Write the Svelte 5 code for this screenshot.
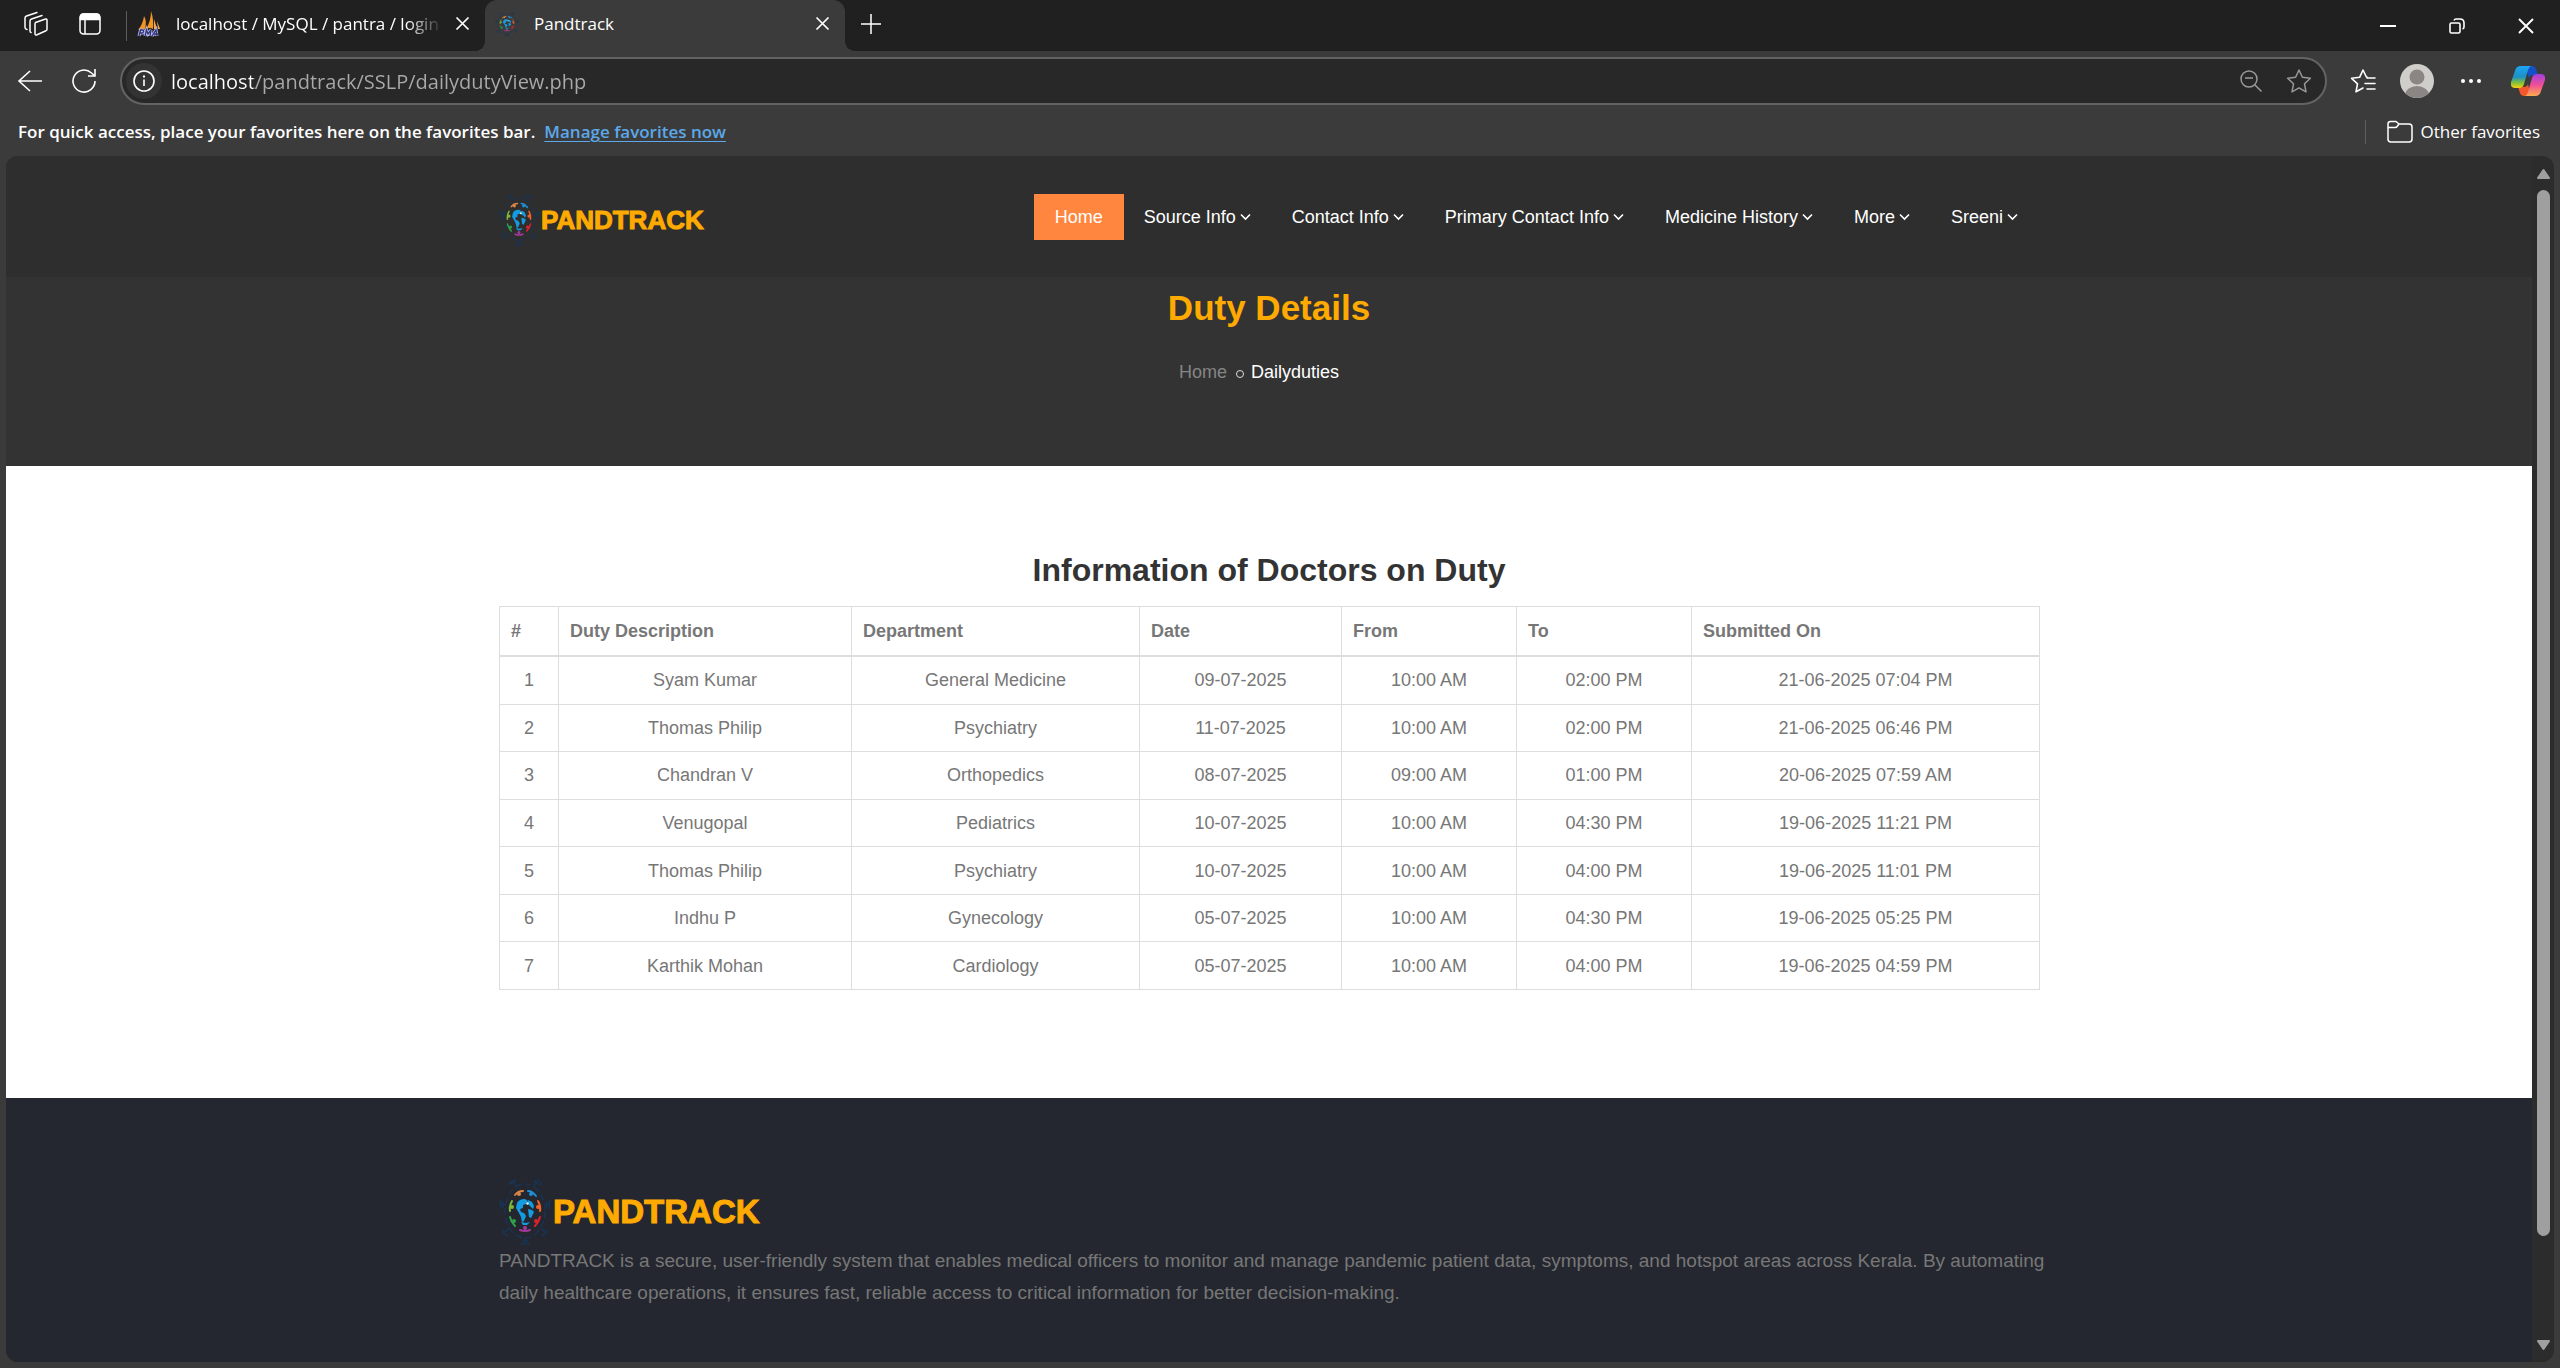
<script>
  let address = $state('localhost/pandtrack/SSLP/dailydutyView.php');

  const menus = ['Source Info', 'Contact Info', 'Primary Contact Info', 'Medicine History', 'More', 'Sreeni'];

  const columns = ['#', 'Duty Description', 'Department', 'Date', 'From', 'To', 'Submitted On'];

  const duties = [
    ['Syam Kumar', 'General Medicine', '09-07-2025', '10:00 AM', '02:00 PM', '21-06-2025 07:04 PM'],
    ['Thomas Philip', 'Psychiatry', '11-07-2025', '10:00 AM', '02:00 PM', '21-06-2025 06:46 PM'],
    ['Chandran V', 'Orthopedics', '08-07-2025', '09:00 AM', '01:00 PM', '20-06-2025 07:59 AM'],
    ['Venugopal', 'Pediatrics', '10-07-2025', '10:00 AM', '04:30 PM', '19-06-2025 11:21 PM'],
    ['Thomas Philip', 'Psychiatry', '10-07-2025', '10:00 AM', '04:00 PM', '19-06-2025 11:01 PM'],
    ['Indhu P', 'Gynecology', '05-07-2025', '10:00 AM', '04:30 PM', '19-06-2025 05:25 PM'],
    ['Karthik Mohan', 'Cardiology', '05-07-2025', '10:00 AM', '04:00 PM', '19-06-2025 04:59 PM']
  ];
</script>

{#snippet emblem(cls)}
  <svg class={cls} viewBox="0 0 52 66" preserveAspectRatio="none" fill="none" aria-hidden="true">
    <g stroke="#16365c" stroke-width="1.2">
      <ellipse cx="26" cy="32" rx="20" ry="27" stroke-dasharray="7 3" />
      <path d="M18 8 14 3M10 5l3-3 3-1M12 5l5-4M34 8l4-5M36 1l4 1 3 4M35 2l5 4M7 26l-5-1M1 21l1 9M4 22v7M45 26l5-1M51 21l-1 9M48 22v7M10 49l-4 4M3 50l2 4 4 3M4 54l5 2M42 49l4 4M49 50l-2 4-4 3M48 54l-5 2M26 59v6M21 65h10M23 62h6" />
    </g>
    <g stroke-width="2" stroke-linecap="round">
      <path stroke="#d98545" d="M16 16q3-4 8-4" />
      <path stroke="#1c8fd6" d="M29 12q4 0 8 5" />
      <path stroke="#f0642b" d="M39 22q3 5 2 10" />
      <path stroke="#d8242f" d="M41 38q-1 5-5 9" />
      <path stroke="#a33a9b" d="M31 51q-5 2-10 0" />
      <path stroke="#2ea04a" d="M16 47q-4-4-5-9" />
      <path stroke="#7cb93b" d="M11 32q-1-5 2-10" />
    </g>
    <g>
      <circle cx="20" cy="15" r="2" fill="#d98545" />
      <circle cx="32" cy="15" r="2" fill="#1c8fd6" />
      <circle cx="39" cy="28" r="2" fill="#f0642b" />
      <circle cx="37" cy="42" r="2" fill="#d8242f" />
      <circle cx="26" cy="49" r="2" fill="#a33a9b" />
      <circle cx="15" cy="42" r="2" fill="#2ea04a" />
      <circle cx="13" cy="28" r="2" fill="#7cb93b" />
    </g>
    <path fill="#159be0" d="M18 24q2-4 8-4l3 2-2 3-3 1v3l-3 1 1 3 3 1 2 3-2 5-2 1-1-5-2-4-3-5zM29 21l4 2 2 4-1 3-3-3-2-2zM29 30l4 1 2 2-3 6-2-1zM22 43l5 1 4-1-3 3h-4z" />
    <path fill="#d5effb" d="m28 23 2 1-1 2-2-1z" />
  </svg>
{/snippet}

{#snippet cross()}
  <svg width="15" height="15" viewBox="0 0 15 15" aria-hidden="true">
    <path d="m1.500 1.500 12 12m0-12-12 12" stroke="#fff" stroke-width="1.700" fill="none" />
  </svg>
{/snippet}

<div class="window">
  <div class="tabs">
    <button class="tool first" aria-label="Workspaces">
      <svg width="26" height="26" viewBox="0 0 26 26" fill="none" stroke="#fff" stroke-width="1.500" stroke-linejoin="round" stroke-linecap="round">
        <path d="m12.500 11.500 10-3.500q1.500-.5 1.500 1.200v9q0 1-1 1.500l-9 4q-2 .8-2-1.200v-9q0-1.500.5-2zM8 21.500q-1-.2-1-1.500V10q0-1.500 1.500-2L19 4.500M4 18.500q-2-.3-2-2V7q0-1.500 1.500-2L14 1.500" />
      </svg>
    </button>
    <button class="tool" aria-label="Tab actions">
      <svg width="24" height="24" viewBox="0 0 24 24" fill="none" stroke="#fff" stroke-width="1.500">
        <rect x="2" y="2" width="20" height="20" rx="3.500" />
        <path d="M2.500 5q0-3 3-3h13q3 0 3 3v2.500h-19z" fill="#fff" />
        <path d="M7 7v15" />
      </svg>
    </button>
    <span class="tab-rule"></span>
    <div class="tab">
      <svg width="24" height="26" viewBox="0 0 24 26" aria-hidden="true">
        <path fill="#f79521" d="M7 5q3 5 1 13-4-1-7 1Q6 13 7 5M14 0q3 9 2 18-3-2-7 0Q14 10 14 0" />
        <path fill="#f3a953" d="m17 8 3 10h-3zM20 10l3 8h-2z" />
        <path fill="none" stroke="#b9bbe6" stroke-width="3" d="M2 25l1.500-6h2.500q1.500 1.500-.5 3H3M8 25l1.500-6 1.500 4 3-4-1 6M15 25l4-6 1 6M17 23h4" />
        <path fill="none" stroke="#31337d" stroke-width="1.300" d="M2 25l1.500-6h2.500q1.500 1.500-.5 3H3M8 25l1.500-6 1.500 4 3-4-1 6M15 25l4-6 1 6M17 23h4" />
      </svg>
      <span class="tab-title fade">localhost / MySQL / pantra / login</span>
      <button class="close" aria-label="Close tab">{@render cross()}</button>
    </div>
    <div class="tab active">
      {@render emblem('favicon')}
      <span class="tab-title">Pandtrack</span>
      <button class="close" aria-label="Close tab">{@render cross()}</button>
    </div>
    <button class="new-tab" aria-label="New tab">
      <svg width="22" height="22" viewBox="0 0 22 22"><path d="M11 1v20M1 11h20" stroke="#fff" stroke-width="1.500" /></svg>
    </button>
    <div class="window-controls">
      <button aria-label="Minimize"><svg width="16" height="16" viewBox="0 0 16 16"><path d="M0 8h16" stroke="#fff" stroke-width="2" /></svg></button>
      <button aria-label="Restore">
        <svg width="16" height="16" viewBox="0 0 16 16" fill="none" stroke="#fff" stroke-width="1.600">
          <rect x="1" y="5" width="10" height="10" rx="1.500" />
          <path d="M5 2.500Q5.500 1 7 1h4q4 0 4 4v4q0 1.500-1.500 2" />
        </svg>
      </button>
      <button aria-label="Close"><svg width="16" height="16" viewBox="0 0 16 16"><path d="m1 1 14 14M15 1 1 15" stroke="#fff" stroke-width="1.900" /></svg></button>
    </div>
  </div>

  <div class="toolbar">
    <button class="tool" aria-label="Back">
      <svg width="26" height="26" viewBox="0 0 26 26" fill="none" stroke="#fff" stroke-width="1.600"><path d="M13 3 2 13l11 10M2 13h23" /></svg>
    </button>
    <button class="tool" aria-label="Refresh">
      <svg width="26" height="26" viewBox="0 0 26 26" fill="none" stroke="#fff" stroke-width="1.600"><path d="M24 13A11 11 0 1 1 20.500 5L24 8M24 1v7h-7" /></svg>
    </button>
    <form class="address" onsubmit={(e) => e.preventDefault()}>
      <button type="button" class="site-info" aria-label="View site information">
        <svg width="22" height="22" viewBox="0 0 22 22" fill="none" stroke="#fff" stroke-width="1.600">
          <circle cx="11" cy="11" r="10" /><path d="M11 9.500v6.500" /><path d="M11 5.500v2" stroke-width="2" />
        </svg>
      </button>
      <input type="text" aria-label="Address and search bar" bind:value={address} />
      <button type="button" class="tool" aria-label="Zoom out">
        <svg width="24" height="24" viewBox="0 0 24 24" fill="none" stroke="#999" stroke-width="1.500"><circle cx="10" cy="10" r="8" /><path d="M6 9h8M15.500 15.500l7 7" /></svg>
      </button>
      <button type="button" class="tool" aria-label="Add to favorites">
        <svg width="26" height="26" viewBox="0 0 26 26" fill="none" stroke="#999" stroke-width="1.500" stroke-linejoin="round"><path d="m13 2 3.400 7.300 8 1-5.900 5.500 1.500 8-7-3.900-7 3.900 1.500-8L1.600 10.300l8-1z" /></svg>
      </button>
    </form>
    <button class="tool" aria-label="Favorites">
      <svg width="26" height="26" viewBox="0 0 26 26" fill="none" stroke="#fff" stroke-width="1.600" stroke-linejoin="round" stroke-linecap="round"><path d="M17 9h-.6L13 2 9.600 9.300l-8 1 5.900 5.500-1.500 8L13 20M17 10h8M15 15.500h10M17 21h8" /></svg>
    </button>
    <button class="avatar" aria-label="Profile">
      <svg width="34" height="34" viewBox="0 0 34 34">
        <defs><clipPath id="face"><circle cx="17" cy="17" r="17" /></clipPath></defs>
        <g clip-path="url(#face)"><path fill="#d0cecb" d="M0 0h34v34H0z" /><circle cx="17" cy="13" r="7.500" fill="#8b8683" /><ellipse cx="17" cy="31" rx="12" ry="9" fill="#8b8683" /></g>
      </svg>
    </button>
    <button class="tool" aria-label="Settings and more">
      <svg width="22" height="6" viewBox="0 0 22 6" fill="#fff"><circle cx="3" cy="3" r="2" /><circle cx="11" cy="3" r="2" /><circle cx="19" cy="3" r="2" /></svg>
    </button>
    <button class="copilot" aria-label="Copilot">
      <svg width="34" height="32" viewBox="0 0 34 32">
        <defs>
          <linearGradient id="cool" x1="0" y1="0" x2="0" y2="1"><stop offset="0" stop-color="#1aa8f5" /><stop offset=".5" stop-color="#1f8fc4" /><stop offset=".75" stop-color="#7cbf3d" /><stop offset="1" stop-color="#f7d10c" /></linearGradient>
          <linearGradient id="warm" x1="0" y1="0" x2="0" y2="1"><stop offset="0" stop-color="#a23fe0" /><stop offset=".5" stop-color="#f04f96" /><stop offset="1" stop-color="#ffab4d" /></linearGradient>
        </defs>
        <path fill="#1550c9" d="M14 1h7q3 0 4 3l2 6h-5q-3 0-4 3z" />
        <path fill="#f3572c" d="M20 31h-7q-3 0-4-3l-2-6h6q3 0 4-3z" />
        <path fill="url(#cool)" d="M10 1h10q-2 1-3 4l-4 14q-1 4-5 4H4q-5 0-4-6L4 6q1-5 6-5" />
        <path fill="url(#warm)" d="M24 31H14q2-1 3-4l4-14q1-4 5-4h4q5 0 4 6l-4 11q-1 5-6 5" />
      </svg>
    </button>
  </div>

  <div class="favorites">
    <span class="hint">For quick access, place your favorites here on the favorites bar.</span>
    <a href="#favorites">Manage favorites now</a>
    <span class="fav-rule"></span>
    <button class="other">
      <svg width="26" height="24" viewBox="0 0 26 24" fill="none" stroke="#fff" stroke-width="1.500" stroke-linejoin="round"><path d="M1 20V4q0-2.500 2.500-2.500H9L12 4h10q3 0 3 3v12q0 3-3 3H4q-3 0-3-3M1 7.500h7q1.500 0 2.500-1.500L12 4" /></svg>
      Other favorites
    </button>
  </div>

  <div class="viewport">
    <div class="page">
      <header>
        <div class="container bar">
          <a class="brand" href="#home">{@render emblem('mark')}<span>PANDTRACK</span></a>
          <nav>
            <a class="current" href="#home">Home</a>
            {#each menus as menu}
              <button>{menu}<svg width="11" height="8" viewBox="0 0 11 8" aria-hidden="true"><path d="m1 1.500 4.500 4.500 4.500-4.500" fill="none" stroke="#fff" stroke-width="1.600" /></svg></button>
            {/each}
          </nav>
        </div>
      </header>

      <section class="banner">
        <h1>Duty Details</h1>
        <div class="crumbs"><a href="#home">Home</a><i></i><span>Dailyduties</span></div>
      </section>

      <main>
        <div class="container">
          <h2>Information of Doctors on Duty</h2>
          <table>
            <colgroup>
              <col class="c-num" /><col class="c-name" /><col class="c-dept" /><col class="c-date" /><col class="c-time" /><col class="c-time" /><col class="c-sub" />
            </colgroup>
            <thead>
              <tr>{#each columns as column}<th scope="col">{column}</th>{/each}</tr>
            </thead>
            <tbody>
              {#each duties as duty, i}
                <tr><td>{i + 1}</td>{#each duty as value}<td>{value}</td>{/each}</tr>
              {/each}
            </tbody>
          </table>
        </div>
      </main>

      <footer>
        <div class="container">
          <a class="brand large" href="#home">{@render emblem('mark')}<span>PANDTRACK</span></a>
          <p>PANDTRACK is a secure, user-friendly system that enables medical officers to monitor and manage pandemic patient data, symptoms, and hotspot areas across Kerala. By automating daily healthcare operations, it ensures fast, reliable access to critical information for better decision-making.</p>
        </div>
      </footer>
    </div>
    <div class="scrollbar">
      <svg width="15" height="12" viewBox="0 0 15 12"><path d="M7.500 2 13 10H2z" fill="#9f9f9f" stroke="#9f9f9f" stroke-width="2" stroke-linejoin="round" /></svg>
      <div class="track"><span></span></div>
      <svg width="15" height="12" viewBox="0 0 15 12"><path d="M7.500 10 13 2H2z" fill="#9f9f9f" stroke="#9f9f9f" stroke-width="2" stroke-linejoin="round" /></svg>
    </div>
  </div>
</div>

<style>
  :global(body) {
    margin: 0;
    background: #3b3b3b;
  }

  .window {
    display: flex;
    flex-direction: column;
    height: 100vh;
    overflow: hidden;
    background: #3b3b3b;
    color: #fff;
    font-family: 'Segoe UI', 'Open Sans', sans-serif;
    font-size: 17px;
  }

  .window * {
    box-sizing: border-box;
  }

  button {
    display: flex;
    align-items: center;
    justify-content: center;
    flex: none;
    padding: 0;
    border: 0;
    background: none;
    color: inherit;
    font: inherit;
  }

  svg {
    display: block;
    flex: none;
  }

  .tool {
    width: 36px;
    height: 36px;
  }

  .tabs {
    display: flex;
    flex: none;
    align-items: center;
    height: 51px;
    background: #202020;
  }

  .tabs .tool {
    margin: 0 18px 3px 0;
  }

  .tabs .first {
    margin-left: 18px;
  }

  .tab-rule {
    width: 1px;
    height: 30px;
    background: #5c5c5c;
  }

  .tab {
    position: relative;
    display: flex;
    align-items: center;
    width: 358px;
    height: 51px;
    padding: 0 15px 4px 10px;
  }

  .active {
    width: 360px;
    border-radius: 12px 12px 0 0;
    background: #3b3b3b;
  }

  .active::before,
  .active::after {
    content: '';
    position: absolute;
    bottom: 0;
    width: 10px;
    height: 10px;
  }

  .active::before {
    left: -10px;
    background: radial-gradient(circle at 0 0, #202020 10px, #3b3b3b 10px);
  }

  .active::after {
    right: -10px;
    background: radial-gradient(circle at 100% 0, #202020 10px, #3b3b3b 10px);
  }

  .tab-title {
    flex: 1;
    min-width: 0;
    margin: 0 12px 0 15px;
    overflow: hidden;
    white-space: nowrap;
  }

  .fade {
    mask-image: linear-gradient(to right, #000 86%, transparent);
  }

  :global(.favicon) {
    width: 24px;
    height: 24px;
  }

  .new-tab {
    width: 52px;
    height: 48px;
    margin-bottom: 4px;
  }

  .window-controls {
    display: flex;
    margin-left: auto;
  }

  .window-controls button {
    width: 69px;
    height: 51px;
  }

  .toolbar {
    display: flex;
    flex: none;
    align-items: center;
    gap: 18px;
    height: 60px;
    padding: 0 14px 0 12px;
  }

  .address {
    display: flex;
    flex: 1;
    align-items: center;
    height: 48px;
    padding: 0 8px 0 4px;
    border: 2px solid #636363;
    border-radius: 24px;
    background: #282828;
  }

  .address .tool {
    margin-left: 12px;
  }

  .site-info {
    width: 36px;
    height: 36px;
    border-radius: 50%;
    background: #333;
  }

  .address input {
    flex: 1;
    min-width: 0;
    height: 36px;
    padding: 0 0 0 9px;
    border: 0;
    outline: 0;
    background: linear-gradient(to right, #fff 91px, #aaa 91px);
    background-clip: text;
    color: transparent;
    font: inherit;
    font-size: 20px;
  }

  .avatar {
    width: 36px;
    height: 36px;
  }

  .copilot {
    width: 36px;
    height: 36px;
    margin-left: 3px;
  }

  .favorites {
    display: flex;
    flex: none;
    align-items: center;
    gap: 9px;
    height: 45px;
    padding: 0 20px 4px 18px;
  }

  .hint,
  .favorites a {
    font-weight: 600;
  }

  .favorites a {
    color: #5ca8e8;
    text-underline-offset: 3px;
  }

  .fav-rule {
    width: 1px;
    height: 24px;
    margin-left: auto;
    background: #5f5f5f;
  }

  .other {
    gap: 8px;
    margin-left: 12px;
  }

  .viewport {
    display: flex;
    flex: 1;
    min-height: 0;
    margin: 0 6px 6px;
    overflow: hidden;
    border-radius: 12px;
    background: #2c2c2c;
  }

  .page {
    display: flex;
    flex: 1;
    flex-direction: column;
    min-width: 0;
    overflow: hidden;
    color: #777;
    font-family: Arial, 'Liberation Sans', sans-serif;
    font-size: 18px;
  }

  .scrollbar {
    display: flex;
    flex: none;
    flex-direction: column;
    align-items: center;
    width: 22px;
    padding: 12px 0 11px;
  }

  .track {
    flex: 1;
    width: 13px;
    padding-top: 10px;
  }

  .track span {
    display: block;
    height: 91%;
    border-radius: 7px;
    background: #9f9f9f;
  }

  .container {
    width: 1540px;
    max-width: 100%;
    margin: 0 auto;
  }

  header {
    flex: none;
    padding: 38px 0 31px;
    background: #2e2e2e;
  }

  .bar {
    display: flex;
    align-items: flex-start;
    justify-content: space-between;
    height: 52px;
  }

  .brand {
    display: flex;
    align-items: center;
    gap: 2px;
    color: #ffaa01;
    font-family: Impact, 'Liberation Sans Narrow', 'Liberation Sans', sans-serif;
    font-size: 26px;
    font-weight: 700;
    text-decoration: none;
    -webkit-text-stroke: 1px #ffaa01;
  }

  .brand :global(.mark) {
    width: 40px;
    height: 52px;
  }

  .large {
    font-size: 33px;
  }

  .large :global(.mark) {
    width: 52px;
    height: 66px;
  }

  nav {
    display: flex;
    color: #fff;
  }

  nav a,
  nav button {
    display: flex;
    align-items: center;
    gap: 4px;
    height: 46px;
    padding: 0 21px;
    color: #fff;
    text-decoration: none;
  }

  nav button {
    padding-left: 20px;
  }

  .current {
    background: #ff863f;
  }

  .banner {
    display: flex;
    flex: none;
    flex-direction: column;
    align-items: center;
    padding: 10px 0 82px;
    background: #333;
  }

  h1 {
    margin: 0;
    color: #ffaa01;
    font-size: 35px;
    line-height: 42px;
  }

  .crumbs {
    display: flex;
    align-items: center;
    margin-top: 32px;
    padding-right: 20px;
    color: #fff;
    line-height: 23px;
  }

  .crumbs a {
    color: #858585;
    text-decoration: none;
  }

  .crumbs i {
    width: 8px;
    height: 8px;
    margin: 3px 7px 0 9px;
    border: 1px solid #ddd;
    border-radius: 50%;
  }

  main {
    flex: none;
    padding: 84px 0 108px;
    background: #fff;
  }

  h2 {
    margin: 0;
    padding-bottom: 16px;
    color: #333;
    font-size: 32px;
    line-height: 40px;
    text-align: center;
  }

  table {
    width: 100%;
    height: 384px;
    border-collapse: collapse;
    table-layout: fixed;
    line-height: 24px;
  }

  th,
  td {
    padding: 0 11px;
    border: 1px solid #ddd;
    text-align: center;
  }

  th {
    height: 49px;
    border-bottom-width: 2px;
    text-align: left;
  }

  .c-num { width: 59px; }
  .c-name { width: 293px; }
  .c-dept { width: 288px; }
  .c-date { width: 202px; }
  .c-time { width: 175px; }
  .c-sub { width: 348px; }

  footer {
    flex: 1;
    padding-top: 81px;
    background: #24272f;
  }

  footer p {
    margin: 0 -8px 0 0;
    font-size: 19px;
    line-height: 32px;
  }
</style>
